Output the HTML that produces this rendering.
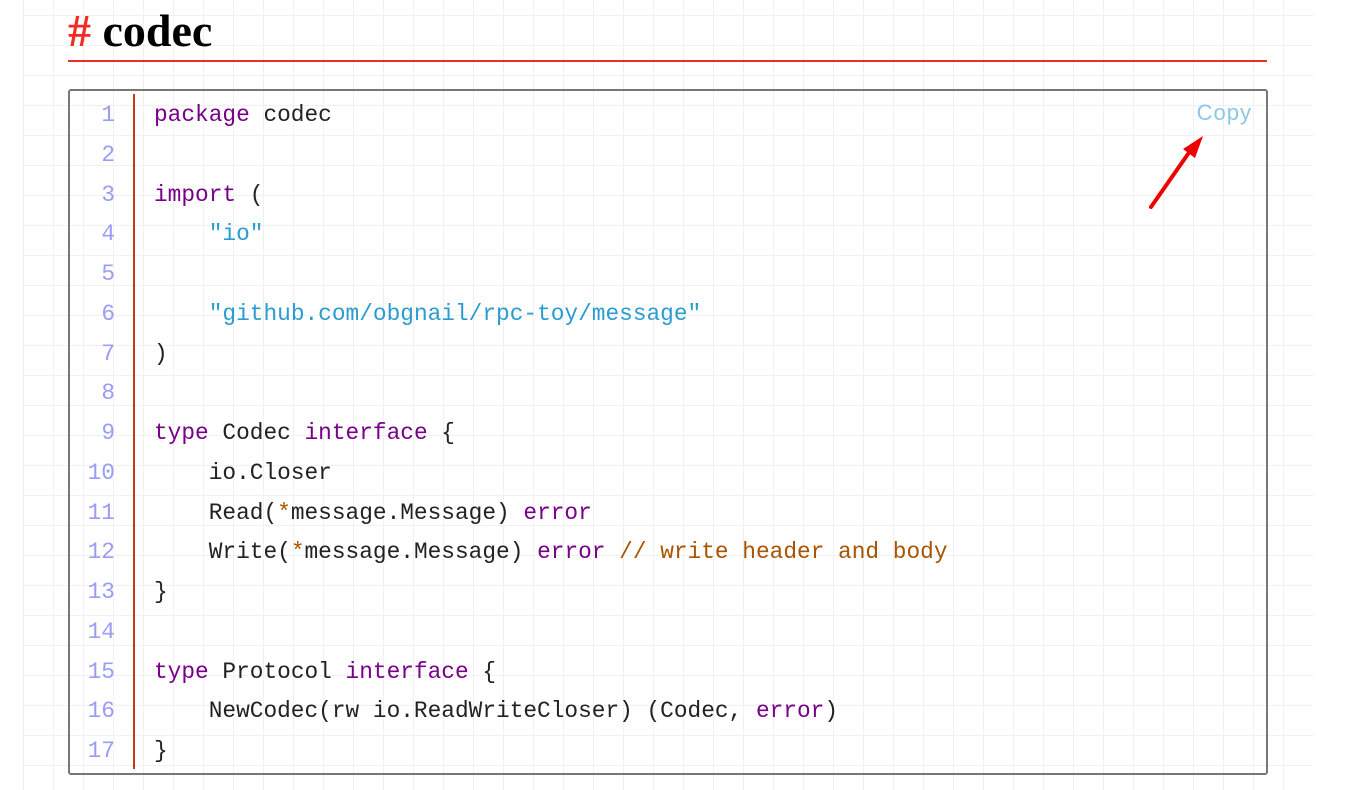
<!DOCTYPE html>
<html><head><meta charset="utf-8"><style>
html,body{margin:0;padding:0;width:1369px;height:790px;overflow:hidden;background:#fff;}
.grid{position:absolute;left:23px;top:0;width:1290px;height:790px;
background-image:linear-gradient(to right,#f1f1f1 1px,transparent 1px),linear-gradient(to bottom,#f1f1f1 1px,transparent 1px);
background-size:30px 30px;background-position:0 15px;}
h1{position:absolute;left:68px;top:0;margin:0;width:1199px;height:60px;border-bottom:2px solid #e8302a;
font-family:"Liberation Serif",serif;font-weight:bold;font-size:46px;line-height:62px;color:#000;}
h1 span{color:#f22c24;}
.box{position:absolute;left:68px;top:89px;width:1196px;height:682px;border:2px solid #777;border-radius:3px;}
.nums{position:absolute;left:0;top:3px;width:63px;height:675px;border-right:2px solid #c83a12;}
.code,.nums{font-family:"Liberation Mono","DejaVu Sans Mono",monospace;font-size:22.8px;line-height:39.75px;white-space:pre;}
.nums div{text-align:right;padding-right:18px;color:#9b9cf7;position:relative;top:2px;}
.code{position:absolute;left:84px;top:5px;color:#222;}
.k{color:#770088}.s{color:#2a9cd0}.c{color:#a85400}
.copy{position:absolute;right:14px;top:9px;font-family:"Liberation Sans",sans-serif;font-size:22px;color:#8ec6e6;letter-spacing:1px;}
</style></head><body>
<div class="grid"></div>
<h1><span>#</span> codec</h1>
<div class="box">
<div class="nums"><div>1</div><div>2</div><div>3</div><div>4</div><div>5</div><div>6</div><div>7</div><div>8</div><div>9</div><div>10</div><div>11</div><div>12</div><div>13</div><div>14</div><div>15</div><div>16</div><div>17</div></div>
<div class="code"><span class="k">package</span> codec

<span class="k">import</span> (
    <span class="s">"io"</span>

    <span class="s">"github.com/obgnail/rpc-toy/message"</span>
)

<span class="k">type</span> Codec <span class="k">interface</span> {
    io.Closer
    Read(<span class="c">*</span>message.Message) <span class="k">error</span>
    Write(<span class="c">*</span>message.Message) <span class="k">error</span> <span class="c">// write header and body</span>
}

<span class="k">type</span> Protocol <span class="k">interface</span> {
    NewCodec(rw io.ReadWriteCloser) (Codec, <span class="k">error</span>)
}</div>
<div class="copy">Copy</div>
</div>
<svg style="position:absolute;left:0;top:0" width="1369" height="790">
<line x1="1151" y1="207" x2="1188" y2="154" stroke="#ee0000" stroke-width="4" stroke-linecap="round"/>
<polygon points="1203,136 1183,149 1195,158" fill="#ee0000"/>
</svg>
</body></html>
